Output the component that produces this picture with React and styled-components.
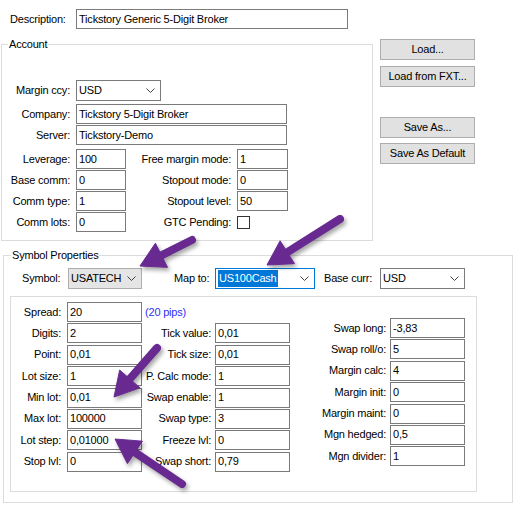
import React from "react";
import styled, { createGlobalStyle } from "styled-components";

const Global = createGlobalStyle`
  *, *::before, *::after { box-sizing: border-box; }
  html, body { margin: 0; padding: 0; background: #fff; }
  body {
    font-family: "Liberation Sans", Arial, sans-serif;
    font-size: 11px;
    letter-spacing: -0.2px;
    color: #000;
  }
`;

const Page = styled.div`
  position: relative;
  width: 517px;
  height: 509px;
  padding-top: 9px;
  background: #fff;
  overflow: hidden;
`;

const Row = styled.div`
  display: flex;
  align-items: center;
  height: ${(p) => p.$h || 20}px;
  margin-top: ${(p) => p.$mt || 0}px;
  padding-left: ${(p) => p.$pl || 0}px;
`;

const Label = styled.span`
  display: block;
  flex: none;
  width: ${(p) => p.$w}px;
  margin-left: ${(p) => p.$ml || 0}px;
  padding-right: ${(p) => p.$pr ?? 6}px;
  text-align: ${(p) => p.$align || "right"};
  white-space: nowrap;
  line-height: 13px;
`;

const TextBox = styled.div`
  flex: none;
  width: ${(p) => p.$w}px;
  height: 20px;
  border: 1px solid #7a7a7a;
  background: #fff;
  padding: 0 2px;
  display: flex;
  align-items: center;
  white-space: nowrap;
  overflow: hidden;
  line-height: 13px;
`;

const Combo = styled.div`
  flex: none;
  width: ${(p) => p.$w}px;
  height: 21px;
  border: 1px solid
    ${(p) => (p.$focus ? "#0078d7" : p.$disabled ? "#adadad" : "#7a7a7a")};
  background: ${(p) => (p.$disabled ? "#e5e5e5" : "#fff")};
  padding: 0 5px 0 2px;
  display: flex;
  align-items: center;
  justify-content: space-between;
  white-space: nowrap;
  line-height: 13px;
`;

const Selected = styled.span`
  background: #0078d7;
  color: #fff;
  padding: 2px 1px;
  line-height: 13px;
`;

const Chevron = () => (
  <svg width="9" height="5" viewBox="0 0 9 5" style={{ flex: "none" }}>
    <polyline
      points="0.5,0.5 4.5,4.5 8.5,0.5"
      fill="none"
      stroke="#404040"
      strokeWidth="1"
    />
  </svg>
);

const CheckBox = styled.div`
  flex: none;
  width: 13px;
  height: 13px;
  border: 1px solid #333;
  background: #fff;
`;

const Middle = styled.div`
  display: flex;
  align-items: flex-start;
  margin-top: 9px;
`;

const Group = styled.fieldset`
  margin: ${(p) => p.$margin};
  width: ${(p) => p.$w}px;
  border: 1px solid #dcdcdc;
  padding: ${(p) => p.$pad};
  min-width: 0;
`;

const Legend = styled.legend`
  margin-left: ${(p) => p.$ml}px;
  padding: 0 1px;
  line-height: 13px;
  height: 13px;
`;

const ButtonCol = styled.div`
  display: flex;
  flex-direction: column;
  margin-left: 7px;
  margin-top: 1px;
`;

const Button = styled.div`
  width: 95px;
  height: 21px;
  margin-top: ${(p) => p.$mt || 0}px;
  background: #e1e1e1;
  border: 1px solid #adadad;
  display: flex;
  align-items: center;
  justify-content: center;
  white-space: nowrap;
  line-height: 13px;
`;

const Panel = styled.div`
  margin: 7px 0 0 6px;
  width: 467px;
  height: 196px;
  border: 1px solid #dcdcdc;
  padding-top: 5px;
  display: flex;
  align-items: flex-start;
`;

const FieldGrid = styled.div`
  display: grid;
  grid-template-columns: ${(p) => p.$cols};
  grid-auto-rows: 20px;
  row-gap: 1.4px;
  margin-top: ${(p) => p.$mt || 0}px;
  align-items: center;
`;

const GridLabel = styled.span`
  text-align: right;
  padding-right: ${(p) => p.$pr}px;
  white-space: nowrap;
  line-height: 13px;
`;

const Pips = styled.span`
  color: #2f2ff5;
  padding-left: 3px;
  white-space: nowrap;
`;

const Overlay = styled.svg`
  position: absolute;
  left: 0;
  top: 0;
  width: 517px;
  height: 509px;
  pointer-events: none;
  filter: drop-shadow(2px 3px 2px rgba(0, 0, 0, 0.35));
`;

const arrows = [
  { t: [192, 240], p: [140, 266] },
  { t: [340, 219], p: [267, 265] },
  { t: [157, 348], p: [114, 397] },
  { t: [182, 484], p: [115, 439] },
];

function Arrow({ t, p }) {
  const dx = p[0] - t[0];
  const dy = p[1] - t[1];
  const len = Math.hypot(dx, dy);
  const ux = dx / len;
  const uy = dy / len;
  const nx = -uy;
  const ny = ux;
  const head = 24;
  const half = 13.5;
  const bx = p[0] - ux * head;
  const by = p[1] - uy * head;
  const lx = p[0] - ux * (head - 4);
  const ly = p[1] - uy * (head - 4);
  const pts = [
    [p[0], p[1]],
    [bx + nx * half, by + ny * half],
    [bx - nx * half, by - ny * half],
  ]
    .map((a) => a.join(","))
    .join(" ");
  return (
    <g fill="#682a91" stroke="#682a91">
      <line
        x1={t[0]}
        y1={t[1]}
        x2={lx}
        y2={ly}
        strokeWidth="8"
        strokeLinecap="round"
      />
      <polygon points={pts} strokeWidth="1" strokeLinejoin="round" />
    </g>
  );
}

const leftRows = [
  ["Digits:", "2", "Tick value:", "0,01"],
  ["Point:", "0,01", "Tick size:", "0,01"],
  ["Lot size:", "1", "P. Calc mode:", "1"],
  ["Min lot:", "0,01", "Swap enable:", "1"],
  ["Max lot:", "100000", "Swap type:", "3"],
  ["Lot step:", "0,01000", "Freeze lvl:", "0"],
  ["Stop lvl:", "0", "Swap short:", "0,79"],
];

const rightRows = [
  ["Swap long:", "-3,83"],
  ["Swap roll/o:", "5"],
  ["Margin calc:", "4"],
  ["Margin init:", "0"],
  ["Margin maint:", "0"],
  ["Mgn hedged:", "0,5"],
  ["Mgn divider:", "1"],
];

export default function App() {
  return (
    <Page>
      <Global />
      <Row $pl={10}>
        <Label $w={66} $align="left">
          Description:
        </Label>
        <TextBox $w={272}>Tickstory Generic 5-Digit Broker</TextBox>
      </Row>

      <Middle>
        <Group $margin="0 0 0 1px" $w={372} $pad="29px 0 8px 0">
          <Legend $ml={6}>Account</Legend>
          <Row $h={21}>
            <Label $w={74}>Margin ccy:</Label>
            <Combo $w={85}>
              <span>USD</span>
              <Chevron />
            </Combo>
          </Row>
          <Row $mt={3}>
            <Label $w={74}>Company:</Label>
            <TextBox $w={211}>Tickstory 5-Digit Broker</TextBox>
          </Row>
          <Row $mt={1}>
            <Label $w={74}>Server:</Label>
            <TextBox $w={211}>Tickstory-Demo</TextBox>
          </Row>
          <Row $mt={4}>
            <Label $w={74}>Leverage:</Label>
            <TextBox $w={50}>100</TextBox>
            <Label $w={111}>Free margin mode:</Label>
            <TextBox $w={51}>1</TextBox>
          </Row>
          <Row $mt={1}>
            <Label $w={74}>Base comm:</Label>
            <TextBox $w={50}>0</TextBox>
            <Label $w={111}>Stopout mode:</Label>
            <TextBox $w={51}>0</TextBox>
          </Row>
          <Row $mt={1}>
            <Label $w={74}>Comm type:</Label>
            <TextBox $w={50}>1</TextBox>
            <Label $w={111}>Stopout level:</Label>
            <TextBox $w={51}>50</TextBox>
          </Row>
          <Row $mt={1}>
            <Label $w={74}>Comm lots:</Label>
            <TextBox $w={50}>0</TextBox>
            <Label $w={111}>GTC Pending:</Label>
            <CheckBox />
          </Row>
        </Group>

        <ButtonCol>
          <Button>Load...</Button>
          <Button $mt={6}>Load from FXT...</Button>
          <Button $mt={30}>Save As...</Button>
          <Button $mt={5}>Save As Default</Button>
        </ButtonCol>
      </Middle>

      <Group $margin="8px 0 0 3px" $w={510} $pad="6px 0 10px 0">
        <Legend $ml={7}>Symbol Properties</Legend>
        <Row $h={21} $pl={18}>
          <Label $w={46} $align="left" $pr={0}>
            Symbol:
          </Label>
          <Combo $w={74} $disabled>
            <span>USATECH</span>
            <Chevron />
          </Combo>
          <Label $w={41} $ml={32} $align="left" $pr={0}>
            Map to:
          </Label>
          <Combo $w={100} $focus>
            <Selected>US100Cash</Selected>
            <Chevron />
          </Combo>
          <Label $w={56} $ml={9} $align="left" $pr={0}>
            Base curr:
          </Label>
          <Combo $w={85}>
            <span>USD</span>
            <Chevron />
          </Combo>
        </Row>

        <Panel>
          <FieldGrid $cols="56px 75px 73px 75px">
            <GridLabel $pr={6}>Spread:</GridLabel>
            <TextBox $w={75}>20</TextBox>
            <Pips>(20 pips)</Pips>
            <span />
            {leftRows.map(([l1, v1, l2, v2]) => (
              <React.Fragment key={l1}>
                <GridLabel $pr={6}>{l1}</GridLabel>
                <TextBox $w={75}>{v1}</TextBox>
                <GridLabel $pr={4}>{l2}</GridLabel>
                <TextBox $w={75}>{v2}</TextBox>
              </React.Fragment>
            ))}
          </FieldGrid>
          <FieldGrid $cols="100px 75px" $mt={16}>
            {rightRows.map(([l, v]) => (
              <React.Fragment key={l}>
                <GridLabel $pr={4}>{l}</GridLabel>
                <TextBox $w={75}>{v}</TextBox>
              </React.Fragment>
            ))}
          </FieldGrid>
        </Panel>
      </Group>

      <Overlay viewBox="0 0 517 509">
        {arrows.map((a, i) => (
          <Arrow key={i} {...a} />
        ))}
      </Overlay>
    </Page>
  );
}
